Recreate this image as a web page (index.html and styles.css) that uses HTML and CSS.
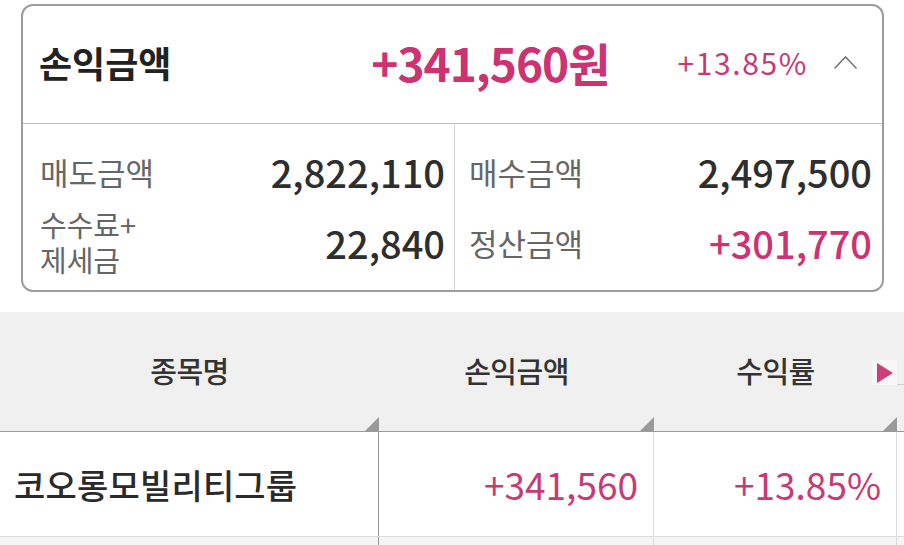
FILE: index.html
```html
<!DOCTYPE html>
<html lang="ko">
<head>
<meta charset="utf-8">
<link rel="stylesheet" href="styles.css">
</head>
<body>
<section class="card">
  <div class="card-head">
    <span class="head-title">손익금액</span>
    <span class="head-amount">+341,560원</span>
    <span class="head-rate">+13.85%</span>
    <svg class="chev" width="25" height="15" viewBox="0 0 25 15"><path d="M1.5 13.5 L12.5 2 L23.5 13.5" fill="none" stroke="#777" stroke-width="1.6"/></svg>
  </div>
  <div class="card-body">
    <div class="half">
      <div class="row"><span class="lbl">매도금액</span><span class="val">2,822,110</span></div>
      <div class="row"><span class="lbl lbl-sm"><span class="ln">수수료+</span><span class="ln">제세금</span></span><span class="val">22,840</span></div>
    </div>
    <div class="half half-r">
      <div class="row"><span class="lbl">매수금액</span><span class="val">2,497,500</span></div>
      <div class="row"><span class="lbl">정산금액</span><span class="val pink">+301,770</span></div>
    </div>
  </div>
</section>

<section class="table">
  <div class="thead">
    <div class="th"><span>종목명</span><i class="corner"></i></div>
    <div class="th"><span>손익금액</span><i class="corner"></i></div>
    <div class="th"><span>수익률</span><i class="corner"></i><b class="more"><svg width="18" height="22" viewBox="0 0 18 22"><path d="M1 1 L17 11 L1 21 Z" fill="#cc3f7a"/></svg></b></div>
    <div class="th th-cut"></div>
  </div>
  <div class="tbody">
    <div class="td td-name">코오롱모빌리티그룹</div>
    <div class="td td-num">+341,560</div>
    <div class="td td-num td-rate">+13.85%</div>
    <div class="td td-cut"></div>
  </div>
  <div class="tnext">
    <div class="tn"></div><div class="tn"></div><div class="tn"></div><div class="tn"></div>
  </div>
</section>
</body>
</html>
```
FILE: styles.css
```css
* { box-sizing: border-box; }
html, body { margin: 0; padding: 0; background: #fff; }
body {
  width: 904px; height: 545px; overflow: hidden;
  font-family: "Noto Sans CJK KR", "Noto Sans", sans-serif;
  color: #333;
  padding-top: 4px;
}
.card {
  margin: 0 20px 0 21px;
  border: 2px solid #9c9c9c;
  border-radius: 12px;
  height: 288px;
  display: flex; flex-direction: column;
}
.card-head {
  height: 118px;
  display: flex; align-items: center;
  padding: 0 24px 5px 16px;
  border-bottom: 1px solid #bdbdbd;
}
.head-title { font-size: 36px; font-weight: 700; color: #222; letter-spacing: 0; line-height: 1; }
.head-amount { margin-left: auto; font-size: 46px; font-weight: 700; color: #cc3370; letter-spacing: -1px; line-height: 1; }
.head-rate { margin-left: 68px; font-size: 30px; font-weight: 400; color: #c93a72; letter-spacing: 1.6px; line-height: 1; }
.chev { margin-left: 25px; margin-top: 0; }
.card-body { flex: 1; display: grid; grid-template-columns: 431px 1fr; }
.half { display: flex; flex-direction: column; padding: 12px 9px 0 17px; }
.half-r { border-left: 1px solid #d6d6d6; padding-left: 14px; padding-right: 10px; }
.row { display: flex; align-items: center; justify-content: space-between; height: 71px; }
.lbl { font-size: 31px; color: #666; letter-spacing: 0; line-height: 1; }
.lbl-sm { font-size: 29px; display: flex; flex-direction: column; gap: 5px; margin-top: -2px; }
.ln { display: block; line-height: 30px; }
.val { font-size: 38px; font-weight: 500; color: #2e2e2e; letter-spacing: 0; line-height: 1; }
.pink { color: #cc3370; }

.table { margin-top: 20px; }
.thead, .tbody, .tnext { display: grid; grid-template-columns: 379px 275px 243px 7px; }
.thead { background: #f0f0f0; height: 120px; border-bottom: 1px solid #9a9a9a; }
.th { position: relative; display: flex; align-items: center; justify-content: center; font-size: 29px; font-weight: 500; color: #333; letter-spacing: -0.5px; padding-bottom: 3px; }
.corner { position: absolute; right: 0; bottom: 0; width: 0; height: 0; border-style: solid; border-width: 0 0 14px 14px; border-color: transparent transparent #9a9a9a transparent; }
.more { position: absolute; right: 0; top: 48px; width: 25px; height: 25px; background: #f7f7f7; display: flex; align-items: center; justify-content: center; }
.th-cut::before { content: ""; position: absolute; left: 0; top: 72px; width: 7px; height: 1px; background: #d0d0d0; }
.tbody { height: 105px; border-bottom: 1px solid #dcdcdc; }
.td { display: flex; align-items: center; border-right: 1px solid #dcdcdc; }
.td:first-child { border-right-color: #9a9a9a; }
.td-cut { border-right: none; }
.td-name { font-size: 34px; font-weight: 500; color: #2a2a2a; padding-left: 14px; letter-spacing: 0.2px; }
.td-num { justify-content: flex-end; font-size: 37px; color: #c93a72; padding-right: 15px; }
.td-rate { padding-right: 15px; letter-spacing: 0; }
.tnext { height: 20px; background: #f5f5f5; }
.tn { border-right: 1px solid #dcdcdc; }
.tn:first-child { border-right-color: #9a9a9a; }
.tn:last-child { border-right: none; }
```
